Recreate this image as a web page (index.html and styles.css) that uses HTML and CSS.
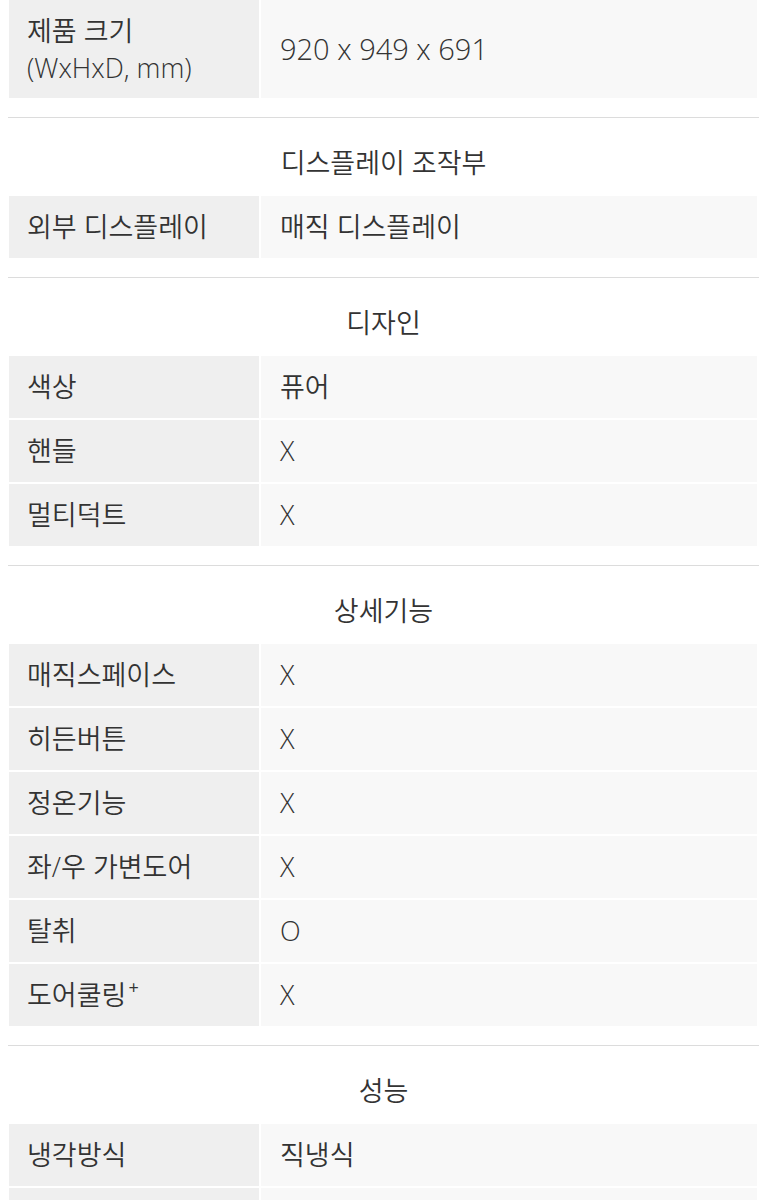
FILE: index.html
```html
<!DOCTYPE html>
<html lang="ko">
<head>
<meta charset="utf-8">
<title>제품 사양</title>
<link rel="stylesheet" href="styles.css">
</head>
<body>
<main class="spec">
  <section class="group">
    <div class="rows">
      <div class="row">
        <div class="label label-multi">제품 크기<br><span class="latin">(WxHxD, mm)</span></div>
        <div class="value"><span class="num">920 x 949 x 691</span></div>
      </div>
    </div>
    <div class="divider"></div>
  </section>

  <section class="group">
    <h2 class="title">디스플레이 조작부</h2>
    <div class="rows">
      <div class="row">
        <div class="label">외부 디스플레이</div>
        <div class="value">매직 디스플레이</div>
      </div>
    </div>
    <div class="divider"></div>
  </section>

  <section class="group">
    <h2 class="title">디자인</h2>
    <div class="rows">
      <div class="row"><div class="label">색상</div><div class="value">퓨어</div></div>
      <div class="row"><div class="label">핸들</div><div class="value">X</div></div>
      <div class="row"><div class="label">멀티덕트</div><div class="value">X</div></div>
    </div>
    <div class="divider"></div>
  </section>

  <section class="group">
    <h2 class="title">상세기능</h2>
    <div class="rows">
      <div class="row"><div class="label">매직스페이스</div><div class="value">X</div></div>
      <div class="row"><div class="label">히든버튼</div><div class="value">X</div></div>
      <div class="row"><div class="label">정온기능</div><div class="value">X</div></div>
      <div class="row"><div class="label">좌/우 가변도어</div><div class="value">X</div></div>
      <div class="row"><div class="label">탈취</div><div class="value">O</div></div>
      <div class="row"><div class="label">도어쿨링<sup class="sup">+</sup></div><div class="value">X</div></div>
    </div>
    <div class="divider"></div>
  </section>

  <section class="group">
    <h2 class="title">성능</h2>
    <div class="rows">
      <div class="row"><div class="label">냉각방식</div><div class="value">직냉식</div></div>
      <div class="row"><div class="label"></div><div class="value"></div></div>
    </div>
  </section>
</main>
</body>
</html>
```

FILE: styles.css
```css
html, body {
  margin: 0;
  padding: 0;
  background: #ffffff;
}

body {
  font-family: "Open Sans", "Noto Sans CJK KR", sans-serif;
  font-size: 27px;
  font-weight: 350;
  color: #333333;
}

.spec {
  width: 751px;
  padding: 0 4px 0 8px;
}

.rows {
  display: grid;
  gap: 2px;
  margin: 0 2px 0 1px;
}

.row {
  display: grid;
  grid-template-columns: 250px 1fr;
  gap: 2px;
}

.label,
.value {
  min-height: 62px;
  display: flex;
  align-items: center;
  box-sizing: border-box;
  line-height: 34px;
}

.label {
  background: #efefef;
  padding: 0 10px 0 18px;
}

.value {
  background: #f8f8f8;
  padding: 0 10px 0 19px;
}

.label-multi {
  display: block;
  min-height: 98px;
  padding-top: 12px;
  padding-bottom: 12px;
  line-height: 37px;
}

.latin {
  font-size: 27px;
}

.num {
  font-size: 29px;
}

.sup {
  font-size: 18px;
  font-weight: 400;
  line-height: 1;
  align-self: flex-start;
  margin-top: 14px;
  margin-left: 2px;
}

.divider {
  height: 1px;
  background: #dcdcdc;
  margin-top: 19px;
}

.title {
  margin: 0;
  padding: 28px 0 16px;
  font-size: 27px;
  font-weight: 350;
  line-height: 34px;
  text-align: center;
  color: #333333;
}
```
